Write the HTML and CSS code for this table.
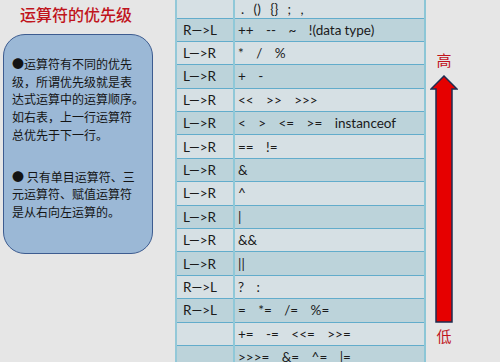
FILE: index.html
```html
<!DOCTYPE html>
<html lang="zh">
<head>
<meta charset="utf-8">
<link rel="stylesheet" href="styles.css">
</head>
<body>
<div class="page">
  <div class="left">
    <h1 class="title">运算符的优先级</h1>
    <div class="note">
      <p class="para">●运算符有不同的优先<br>级，所谓优先级就是表<br>达式运算中的运算顺序。<br>如右表，上一行运算符<br>总优先于下一行。</p>
      <p class="para">● 只有单目运算符、三<br>元运算符、赋值运算符<br>是从右向左运算的。</p>
    </div>
  </div>
  <table class="ops">
    <tr class="first"><td class="dir"></td><td class="op"> .   ()   {}   ;   ,</td></tr>
    <tr class="dark"><td class="dir">R—&gt;L</td><td class="op">++    --    ~    !(data type)</td></tr>
    <tr><td class="dir">L—&gt;R</td><td class="op">*    /    %</td></tr>
    <tr class="dark"><td class="dir">L—&gt;R</td><td class="op">+    -</td></tr>
    <tr><td class="dir">L—&gt;R</td><td class="op">&lt;&lt;    &gt;&gt;    &gt;&gt;&gt;</td></tr>
    <tr class="dark"><td class="dir">L—&gt;R</td><td class="op">&lt;    &gt;    &lt;=    &gt;=    instanceof</td></tr>
    <tr><td class="dir">L—&gt;R</td><td class="op">==    !=</td></tr>
    <tr class="dark"><td class="dir">L—&gt;R</td><td class="op">&amp;</td></tr>
    <tr><td class="dir">L—&gt;R</td><td class="op">^</td></tr>
    <tr class="dark"><td class="dir">L—&gt;R</td><td class="op">|</td></tr>
    <tr><td class="dir">L—&gt;R</td><td class="op">&amp;&amp;</td></tr>
    <tr class="dark"><td class="dir">L—&gt;R</td><td class="op">||</td></tr>
    <tr><td class="dir">R—&gt;L</td><td class="op">?    :</td></tr>
    <tr class="dark"><td class="dir">R—&gt;L</td><td class="op">=    *=    /=    %=</td></tr>
    <tr><td class="dir"></td><td class="op">+=    -=    &lt;&lt;=    &gt;&gt;=</td></tr>
    <tr class="dark"><td class="dir"></td><td class="op">&gt;&gt;&gt;=    &amp;=    ^=    |=</td></tr>
  </table>
  <div class="right">
    <div class="scale">
      <span class="label">高</span>
      <svg class="arrow" width="28" height="248" viewBox="0 0 28 248">
        <path d="M14 1 L27 14 L22 14 L22 247 L6 247 L6 14 L1 14 Z" fill="#e60000" stroke="#1f2d50" stroke-width="1.5" stroke-linejoin="miter"/>
      </svg>
      <span class="label low">低</span>
    </div>
  </div>
</div>
</body>
</html>
```

FILE: styles.css
```css
html, body {
  margin: 0;
  padding: 0;
  background: #e6e6e6;
  overflow: hidden;
}

.page {
  display: flex;
  width: 500px;
  height: 362px;
  overflow: hidden;
}

.left {
  width: 175px;
  flex: none;
}

.title {
  margin: 0;
  padding: 4px 0 0 20px;
  font-family: "Noto Sans CJK SC", sans-serif;
  font-size: 16px;
  font-weight: 500;
  line-height: 20px;
  color: #c0141c;
}

.note {
  margin: 10px 0 0 3px;
  width: 150px;
  height: 220px;
  box-sizing: border-box;
  background: #9bb8d6;
  border: 1.5px solid #3d5c90;
  border-radius: 22px;
  padding: 20px 0 0 8px;
  font-family: "Noto Sans CJK SC", sans-serif;
  font-size: 12px;
  line-height: 17.7px;
  color: #141414;
  white-space: nowrap;
}

.para {
  margin: 0 0 24px 0;
}

.ops {
  flex: none;
  width: 251px;
  border-collapse: collapse;
  align-self: flex-start;
  font-family: Lato, "Liberation Sans", sans-serif;
  font-size: 13.5px;
  color: #1a1a1a;
  border-left: 2px solid #93c8d8;
  border-right: 2px solid #8cc6d6;
}

.ops tr {
  height: 23.4px;
  background: #d6e0e4;
}

.ops tr.first {
  height: 18px;
}

.ops tr.dark {
  background: #bcd3da;
}

.ops td {
  padding: 0;
  border-bottom: 1px solid #62accb;
  white-space: pre;
  vertical-align: middle;
}

.ops .dir {
  width: 50px;
  padding-left: 6px;
  border-right: 2px solid #8fc8d8;
}

.ops .op {
  padding-left: 3px;
  word-spacing: -0.35px;
}

.right {
  flex: 1;
  padding-left: 4px;
}

.scale {
  width: 28px;
  display: flex;
  flex-direction: column;
  align-items: center;
  padding-top: 50px;
}

.label {
  font-family: "Noto Sans CJK SC", sans-serif;
  font-size: 15px;
  line-height: 20px;
  color: #c0141c;
  margin-bottom: 5px;
}

.arrow {
  display: block;
}

.label.low {
  margin-top: 3px;
}
```
